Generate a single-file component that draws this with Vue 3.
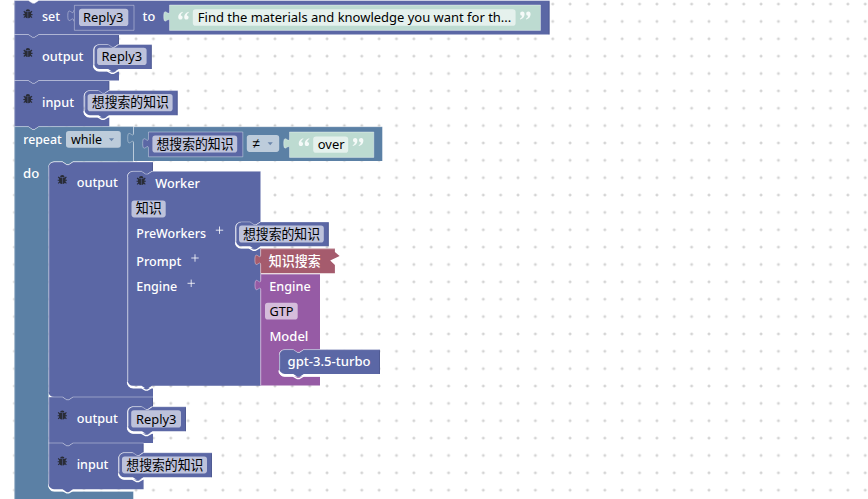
<script setup>
const BLUE = '#5b67a5'
const LOOP = '#5b80a5'
const MINT = '#bddbd1'
const ROSE = '#a55b6d'
const PLUM = '#965ba5'

// Connection shapes shared by every block
const NOTCH = 'l4.2 2.8h2.1l4.2 -2.8'
const BUMP = 'l-4.2 2.8h-2.1l-4.2 -2.8'
const TAB_UP = 'c0 -7 -5.8 5.6 -5.8 -5.4s5.8 1.8 5.8 -5.4'
const TAB_DOWN = 'c0 7 -5.8 -5.6 -5.8 5.4s5.8 -1.8 5.8 5.4'

const top = (x, y, r, round) =>
  round ? `M${x} ${y + 5.5}a5.5 5.5 0 0 1 5.5 -5.5H${x + 14}${NOTCH}H${r}` : `M${x} ${y}H${x + 14}${NOTCH}H${r}`

const bottom = (x, b, round) =>
  `H${x + 24.5}${BUMP}` + (round ? `H${x + 5.5}a5.5 5.5 0 0 1 -5.5 -5.5Z` : `H${x}Z`)

const mouth = (sx, sy, sb) =>
  `V${sy}H${sx + 24.5}${BUMP}H${sx + 5.5}a5.5 5.5 0 0 0 -5.5 5.5V${sb - 5.5}a5.5 5.5 0 0 0 5.5 5.5`

// Statement block, optionally holding a nested statement mouth
function stack(x, y, r, b, o = {}) {
  const m = o.mouth
  const d = top(x, y, r, o.round) + (m ? mouth(...m) + `H${r}` : '') + `V${b}` + bottom(x, b, o.round || o.foot)
  return {
    fill: BLUE,
    d,
    light: top(x, y, r, o.round) + `M${x + 0.4} ${y + (o.round ? 5.5 : 0)}V${b - (o.round || o.foot ? 5 : 0)}`,
    dark: `M${r - 0.5} ${y + 1}V${m ? m[1] : b}`,
    glow: m ? `M${m[0] + 0.3} ${m[2] - 6}a6 6 0 0 0 5.7 5.7H${m[0] + 14}l4.2 2.4h2.1l4.2 -2.4H${r}` : ''
  }
}

// Value block; an inset one is framed by the edge of the socket that holds it
function value(x, y, r, b, fill, tab = true, inset = true) {
  const d = `M${x} ${y}H${r}V${b}H${x}V${y + 16.8}` + (tab ? `${TAB_UP}Z` : 'Z')
  return {
    fill,
    d,
    light: inset
      ? `M${x} ${y}H${r}V${b}H${x}V${y + 16.8}` + (tab ? TAB_UP : `M${x} ${y + 16.8}V${y + 6}`) + `V${y}`
      : `M${x} ${b}V${y + 16.8}${TAB_UP}V${y}H${r}`,
    glow: ''
  }
}

const blocks = [
  stack(14.3, 0.5, 549.6, 34.5),
  stack(14.3, 34.5, 119, 80.5, { mouth: [93.3, 44.4, 71.2] }),
  stack(14.3, 80.5, 109.3, 126.5, { mouth: [83.7, 90.6, 117.2] }),
  {
    fill: LOOP,
    d: top(14.3, 126.6, 133.3) + `V161.4H73${BUMP}H54a5.5 5.5 0 0 0 -5.5 5.5V486a5.5 5.5 0 0 0 5.5 5.5H133.3V510H14.3Z`,
    light: top(14.3, 126.6, 133.3) + 'M14.7 126.6V499',
    glow: 'M48.8 484a6 6 0 0 0 5.7 6.5H62.5l4.2 2.4h2.1l4.2 -2.4H133'
  },
  value(133.5, 126.7, 382.3, 161, LOOP, true, false),
  stack(48.5, 161.9, 153, 397, { mouth: [127.2, 171.2, 388], round: true }),
  stack(48.5, 397, 153, 443, { mouth: [127.2, 406.5, 433.4] }),
  stack(48.5, 443, 143.6, 489.2, { mouth: [118.3, 452.6, 479.4], foot: true }),
  {
    fill: BLUE,
    d: top(127.5, 171.3, 260.5, true) + mouth(235.3, 222, 248.2) + 'H260.5V385.8' + bottom(127.5, 385.8, true),
    light: top(127.5, 171.3, 260.5, true) + 'M127.9 177V381',
    glow: 'M235.6 242.2a6 6 0 0 0 5.7 5.7H249l4.2 2.4h2.1l4.2 -2.4'
  },
  value(74.4, 5.3, 134, 30.3, BLUE, false),
  value(169.5, 5, 540.5, 30.4, MINT),
  stack(94.2, 44.5, 151.8, 69, { round: true }),
  stack(84.5, 90.5, 177.7, 115.2, { round: true }),
  value(148.5, 132, 242.8, 156.8, BLUE),
  value(289.5, 132, 373.8, 157.4, MINT),
  stack(236, 221.9, 328.8, 246.3, { round: true }),
  {
    fill: ROSE,
    d: `M260.5 248.4H334.9V252L339.6 255.9L330.2 260.6L334.9 265V273.3H260.5V265.2${TAB_UP}Z`,
    light: `M260.5 248.8H334.8M260.7 273V265.2${TAB_UP}V249`,
    glow: ''
  },
  {
    fill: PLUM,
    d: `M260.5 274H320V349.5H303.5${BUMP}H284.5a5.5 5.5 0 0 0 -5.5 5.5V371a5.5 5.5 0 0 0 5.5 5.5H320V385.5H260.5V290.4${TAB_UP}Z`,
    light: `M260.8 385V290.4${TAB_UP}V274.3H320`,
    glow: 'M279 370.4a6 6 0 0 0 5.7 5.7H293l4.2 2.4h2.1l4.2 -2.4H320'
  },
  stack(279.3, 349.6, 380, 373.9, { round: true }),
  stack(128, 406.7, 186, 431.2, { round: true }),
  stack(118.9, 452.7, 212, 477.3, { round: true })
]

// x, y, width, height, tint
const fields = [
  [79, 8.8, 49.3, 17.2], [192.8, 9.2, 322.8, 16.5, 'pale'],
  [97.1, 47.8, 49.5, 17.2], [87.6, 94, 85, 17.2],
  [66, 131, 54.8, 16.8], [152.4, 135.4, 84.8, 17.2], [246.8, 135, 32.4, 16.9], [313.2, 136.4, 35, 16.4, 'pale'],
  [131.5, 200.6, 34.2, 16.8], [239, 225.6, 84.8, 17], [265, 302.8, 32.7, 16.8],
  [131.2, 410.3, 49.8, 17.2], [122, 456.4, 85, 17]
]

// text, x, baseline, width, style
const labels = [
  ['set', 42, 21, 18], ['Reply3', 83, 21.8, 40.5, 'ink'], ['to', 142.5, 21, 12.7],
  ['Find the materials and knowledge you want for th...', 197.8, 21.8, 313.5, 'ink'],
  ['output', 42, 61, 41.5], ['Reply3', 101.6, 61, 40.5, 'ink'],
  ['input', 42, 107, 32], ['想搜索的知识', 91.8, 106.6, 77, 'ink'],
  ['repeat', 23.2, 144, 38.5], ['while', 71, 144, 31, 'ink'],
  ['想搜索的知识', 156.5, 148.6, 77, 'ink'], ['≠', 252.6, 148.2, 7.4, 'ink sign'], ['over', 317.8, 149, 26.8, 'ink'],
  ['do', 23, 178, 16.2], ['output', 76.7, 187, 41.2], ['Worker', 155.3, 188, 44.5],
  ['知识', 135.8, 213, 26, 'ink'], ['PreWorkers', 136.3, 238, 69.7],
  ['想搜索的知识', 243, 238.6, 77, 'ink'], ['Prompt', 136.3, 266, 45], ['知识搜索', 268.8, 265.8, 52],
  ['Engine', 136.3, 291, 41], ['Engine', 269.2, 291, 41.5], ['GTP', 269.4, 316, 24, 'ink'],
  ['Model', 269.4, 341, 39], ['gpt-3.5-turbo', 287.6, 366, 83],
  ['output', 76.7, 423, 41.2], ['Reply3', 136, 424, 40.5, 'ink'],
  ['input', 76.7, 469, 31.7], ['想搜索的知识', 126.3, 469.6, 77, 'ink']
]

const bugs = [[27.9, 13.8], [27.9, 52.6], [27.9, 98.7], [62.3, 179.5], [141.2, 180.5], [62.3, 415], [62.3, 461]]
const pluses = [[219.5, 230.2], [195, 258], [191.2, 283.3]]
const arrows = [[111.5, 139.6], [270.2, 143.6]]
const quotes = [[178, 11.4, 0], [519.8, 11.4, 1], [298.5, 137.9, 0], [352.6, 137.9, 1]]
const socket = `M73.6 10.4${TAB_DOWN}`
</script>

<template>
  <svg class="workspace" width="868" height="499" viewBox="0 0 868 499">
    <defs>
      <pattern id="grid" x="5.85" y="-4.6" width="17.361" height="17.361" patternUnits="userSpaceOnUse">
        <path d="M7.2 8.7h3M8.7 7.2v3" class="cross" />
      </pattern>
      <g id="bug">
        <path class="legs" d="M-2.6 -1L-4.1 -2.6M-2.6 .8H-4.6M-2.6 2.4L-4.1 3.9M2.6 -1L4.1 -2.6M2.6 .8H4.6M2.6 2.4L4.1 3.9" />
        <path d="M-2.2 -2.5a2.2 2.1 0 0 1 4.4 0Z M-.25 -2.1V4.5C-2.3 4.4 -3.2 3.1 -3.2 1.5V-2.1Z M.25 -2.1V4.5C2.3 4.4 3.2 3.1 3.2 1.5V-2.1Z" />
      </g>
      <path id="quote" d="M4.7 .3C2.1 .9 .2 3 .2 5.6C.2 7.2 1 8.2 2.4 8.2C3.7 8.2 4.6 7.3 4.6 6.1C4.6 4.9 3.8 4.2 2.8 4.1C2.9 2.8 3.6 1.8 4.9 1.2Z M10.7 .3C8.1 .9 6.2 3 6.2 5.6C6.2 7.2 7 8.2 8.4 8.2C9.7 8.2 10.6 7.3 10.6 6.1C10.6 4.9 9.8 4.2 8.8 4.1C8.9 2.8 9.6 1.8 10.9 1.2Z" />
    </defs>
    <rect width="868" height="499" fill="url(#grid)" />
    <g v-for="(b, i) in blocks" :key="'b' + i">
      <path :d="b.d" :fill="b.fill" />
      <path :d="b.light" class="light" />
      <path v-if="b.dark" :d="b.dark" class="dark" />
      <path v-if="b.glow" :d="b.glow" class="glow" />
    </g>
    <path :d="socket" class="light" />
    <rect
      v-for="(f, i) in fields" :key="'f' + i" :x="f[0]" :y="f[1]" :width="f[2]" :height="f[3]"
      rx="2.8" class="field" :class="f[4]"
    />
    <use v-for="(b, i) in bugs" :key="'g' + i" href="#bug" :transform="`translate(${b[0]} ${b[1]})`" class="bug" />
    <path v-for="(p, i) in pluses" :key="'p' + i" :d="`M${p[0] - 3.7} ${p[1]}h7.4M${p[0]} ${p[1] - 3.7}v7.4`" class="plus" />
    <path v-for="(a, i) in arrows" :key="'a' + i" :d="`M${a[0] - 2.6} ${a[1] - 1.4}h5.2l-2.6 3.1z`" class="arrow" />
    <use
      v-for="(q, i) in quotes" :key="'q' + i" href="#quote" class="quote"
      :transform="q[2] ? `translate(${q[0] + 11} ${q[1] + 8.4}) rotate(180)` : `translate(${q[0]} ${q[1]})`"
    />
    <text
      v-for="(t, i) in labels" :key="'t' + i" :x="t[1]" :y="t[2]" :textLength="t[3]"
      lengthAdjust="spacingAndGlyphs" class="label" :class="t[4]"
    >{{ t[0] }}</text>
  </svg>
</template>

<style scoped>
.workspace { display: block; background: #fff; }
.cross { stroke: #c6c6c6; stroke-width: 1; fill: none; }
.light { fill: none; stroke: #fff; stroke-opacity: .36; stroke-width: 1; }
.dark { fill: none; stroke: #39406b; stroke-opacity: .3; stroke-width: 1; }
.glow { fill: none; stroke: #fff; stroke-width: 1.4; }
.field { fill: #fff; fill-opacity: .6; }
.label { font: 500 13.2px "Noto Sans", "Noto Sans CJK SC", sans-serif; fill: #fff; white-space: pre; }
.label.ink { fill: #000; font-weight: 400; }
.label.sign { font: 13.5px "Liberation Sans", sans-serif; }
.bug { fill: #292c36; }
.legs { stroke: #292c36; stroke-width: 1.1; fill: none; }
.plus { stroke: #fff; stroke-opacity: .8; stroke-width: 1; }
.arrow { fill: #6b86ab; }
.quote { fill: #fff; fill-opacity: .85; }
</style>

<style>
body { overflow: hidden; }
</style>
